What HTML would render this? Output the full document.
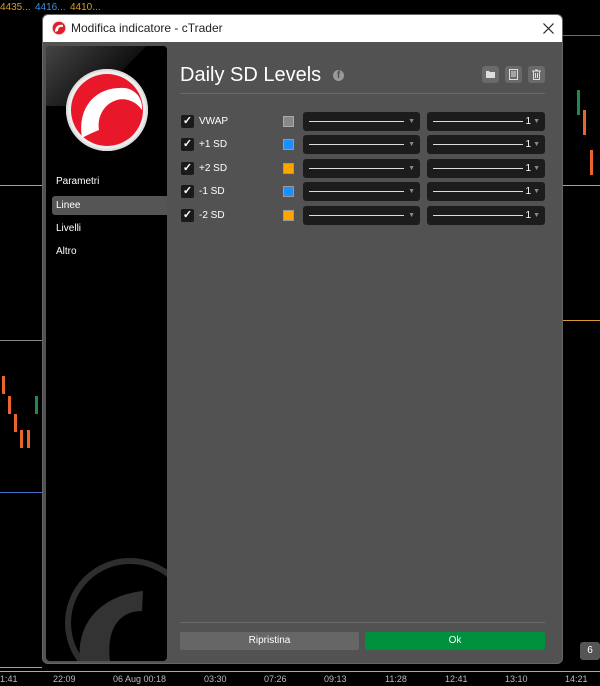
<!DOCTYPE html>
<html><head><meta charset="utf-8"><style>
*{margin:0;padding:0;box-sizing:border-box}
body{width:600px;height:686px;background:#000;position:relative;overflow:hidden;font-family:"Liberation Sans",sans-serif;}
.a{position:absolute}
.t{color:#fff;font-size:10px}
.cb{position:absolute;width:13px;height:13px;background:#1a1a1a;border-radius:2px;color:#fff;font-size:11px;line-height:13px;text-align:center;font-weight:bold}
.dd{position:absolute;height:19px;background:#1c1c1c;border-radius:3px}
.dd i{position:absolute;left:6px;right:16px;top:9px;height:1px;background:#ddd}
.dd b{position:absolute;right:5px;top:6px;font-size:7px;color:#888;font-weight:normal}
.ic{position:absolute;top:66px;width:17px;height:17px;background:#6a6a6a;border-radius:3px}
.ic svg{position:absolute;left:3px;top:3px}
</style></head><body>
<div class="a t" style="left:0;top:2px;color:#d79a2a;font-size:10px">4435...</div>
<div class="a t" style="left:35px;top:2px;color:#3b8ee0;font-size:10px">4416...</div>
<div class="a t" style="left:70px;top:2px;color:#d79a2a;font-size:10px">4410...</div>
<div class="a" style="left:0;top:185px;width:42px;height:1px;background:#d79a2a"></div>
<div class="a" style="left:0;top:340px;width:42px;height:1px;background:#888"></div>
<div class="a" style="left:0;top:492px;width:42px;height:1px;background:#3b6fc0"></div>
<div class="a" style="left:0;top:667px;width:42px;height:1px;background:#d79a2a"></div>
<div class="a" style="left:563px;top:185px;width:37px;height:1px;background:#d79a2a"></div>
<div class="a" style="left:563px;top:320px;width:37px;height:1px;background:#d79a2a"></div>
<div class="a" style="left:563px;top:35px;width:37px;height:1px;background:#3b6fc0"></div>
<div class="a" style="left:2px;top:376px;width:3px;height:18px;background:#e8652f"></div>
<div class="a" style="left:8px;top:396px;width:3px;height:18px;background:#e8652f"></div>
<div class="a" style="left:14px;top:414px;width:3px;height:18px;background:#e8652f"></div>
<div class="a" style="left:20px;top:430px;width:3px;height:18px;background:#e8652f"></div>
<div class="a" style="left:27px;top:430px;width:3px;height:18px;background:#e8652f"></div>
<div class="a" style="left:35px;top:396px;width:3px;height:18px;background:#1f8a4a"></div>
<div class="a" style="left:577px;top:90px;width:3px;height:25px;background:#1f8a4a"></div>
<div class="a" style="left:583px;top:110px;width:3px;height:25px;background:#e8652f"></div>
<div class="a" style="left:590px;top:150px;width:3px;height:25px;background:#e8652f"></div>
<div class="a" style="left:0;top:671px;width:600px;height:1px;background:#aaa"></div>
<div class="a" style="left:0;top:674px;width:600px;font-size:9px;color:#bbb;white-space:nowrap">
<span class="a" style="left:0">1:41</span><span class="a" style="left:53px">22:09</span><span class="a" style="left:113px">06 Aug 00:18</span><span class="a" style="left:204px">03:30</span><span class="a" style="left:264px">07:26</span><span class="a" style="left:324px">09:13</span><span class="a" style="left:385px">11:28</span><span class="a" style="left:445px">12:41</span><span class="a" style="left:505px">13:10</span><span class="a" style="left:565px">14:21</span></div>
<div class="a" style="left:580px;top:642px;width:20px;height:18px;background:#555;border-radius:3px;color:#fff;font-size:10px;text-align:center;line-height:18px">6</div>
<div class="a" style="left:42px;top:14px;width:521px;height:650px;background:#525252;border-radius:6px;overflow:hidden;border:1px solid #666">
 <div class="a" style="left:0;top:0;width:521px;height:27px;background:#fff"></div>
 <svg class="a" style="left:8px;top:5px" width="16" height="16" viewBox="0 0 16 16"><circle cx="8" cy="8" r="7.5" fill="#e8e8e8"/><circle cx="8" cy="8" r="6.3" fill="#e11d2a"/><path d="M4 12 C4 6 8 4 12 5 L12 7 C9 6 7 8 7 11Z" fill="#fff"/></svg>
 <div class="a" style="left:28px;top:6px;font-size:12px;color:#222">Modifica indicatore - cTrader</div>
 <svg class="a" style="left:500px;top:8px" width="11" height="11" viewBox="0 0 11 11"><path d="M0.5 0.5L10.5 10.5M10.5 0.5L0.5 10.5" stroke="#222" stroke-width="1.2"/></svg>
 <div class="a" style="left:3px;top:31px;width:121px;height:615px;background:#000;border-radius:4px;overflow:hidden">
  <div class="a" style="left:0;top:0;width:121px;height:60px;background:linear-gradient(135deg,#444,#111 55%,#000 56%)"></div>
  <svg class="a" style="left:19px;top:22px" width="84" height="84" viewBox="0 0 84 84"><circle cx="42" cy="42" r="41" fill="#eee"/><circle cx="42" cy="42" r="36" fill="#e8182a"/><path d="M17 70 C12 40 30 18 60 20 C72 22 78 32 77 42 C70 32 60 30 52 32 C38 36 32 50 34 62 Q24 66 17 70Z" fill="#fff"/><circle cx="42" cy="42" r="40" fill="none" stroke="#ddd" stroke-width="2"/></svg>
  <div class="a t" style="left:10px;top:130px">Parametri</div>
  <div class="a" style="left:6px;top:150px;width:115px;height:19px;background:#555;border-radius:3px 0 0 3px"></div>
  <div class="a t" style="left:10px;top:154px">Linee</div>
  <div class="a t" style="left:10px;top:177px">Livelli</div>
  <div class="a t" style="left:10px;top:200px">Altro</div>
  <svg class="a" style="left:12px;top:505px" width="109" height="110" viewBox="0 0 109 110"><circle cx="72" cy="72" r="62" fill="none" stroke="#2e2e2e" stroke-width="6"/><path d="M22 110 C18 75 40 45 85 40 L84 60 C60 60 48 80 52 110Z" fill="#333"/></svg>
 </div>
</div>
<div class="a" style="left:180px;top:64px;font-size:20px;color:#fff">Daily SD Levels</div>
<div class="a" style="left:333px;top:70px;width:11px;height:11px;border-radius:50%;background:#999;color:#525252;font-size:10px;font-weight:bold;text-align:center;line-height:12px">f</div>
<div class="ic" style="left:482px"><svg width="11" height="11" viewBox="0 0 11 11"><path d="M1 2h3l1 1h5v6H1z" fill="#ddd"/></svg></div>
<div class="ic" style="left:505px"><svg width="11" height="11" viewBox="0 0 11 11"><rect x="1.5" y="0.5" width="8" height="10" fill="none" stroke="#ddd"/><path d="M3 3h5M3 5h5M3 7h5" stroke="#ddd"/></svg></div>
<div class="ic" style="left:528px"><svg width="11" height="11" viewBox="0 0 11 11"><path d="M1 2h9M4 1h3M2.5 2.5v8h6v-8M4.5 4v5M6.5 4v5" stroke="#ddd" fill="none"/></svg></div>
<div class="a" style="left:180px;top:93px;width:365px;height:1px;background:#6a6a6a"></div>
<div class="a" style="left:180px;top:622px;width:365px;height:1px;background:#6a6a6a"></div>
<div class="a" style="left:180px;top:632px;width:179px;height:18px;background:#666;border-radius:2px;color:#fff;font-size:10px;text-align:center;line-height:18px">Ripristina</div>
<div class="a" style="left:365px;top:632px;width:180px;height:18px;background:#00913f;border-radius:2px;color:#fff;font-size:10px;text-align:center;line-height:18px">Ok</div>
<div class="cb" style="left:181px;top:115px">✓</div><div class="a t" style="left:199px;top:116px">VWAP</div><div class="a" style="left:283px;top:116px;width:11px;height:11px;background:#888;border:1px solid #aaa"></div>
<div class="dd" style="left:303px;top:112px;width:117px"><i></i><b>▼</b></div><div class="dd" style="left:427px;top:112px;width:118px"><i style="right:22px"></i><span class="a t" style="right:14px;top:4px">1</span><b>▼</b></div>
<div class="cb" style="left:181px;top:138px">✓</div><div class="a t" style="left:199px;top:139px">+1 SD</div><div class="a" style="left:283px;top:139px;width:11px;height:11px;background:#1e8fff;border:1px solid #999"></div>
<div class="dd" style="left:303px;top:135px;width:117px"><i></i><b>▼</b></div><div class="dd" style="left:427px;top:135px;width:118px"><i style="right:22px"></i><span class="a t" style="right:14px;top:4px">1</span><b>▼</b></div>
<div class="cb" style="left:181px;top:162px">✓</div><div class="a t" style="left:199px;top:163px">+2 SD</div><div class="a" style="left:283px;top:163px;width:11px;height:11px;background:#ffa500;border:1px solid #999"></div>
<div class="dd" style="left:303px;top:159px;width:117px"><i></i><b>▼</b></div><div class="dd" style="left:427px;top:159px;width:118px"><i style="right:22px"></i><span class="a t" style="right:14px;top:4px">1</span><b>▼</b></div>
<div class="cb" style="left:181px;top:185px">✓</div><div class="a t" style="left:199px;top:186px">-1 SD</div><div class="a" style="left:283px;top:186px;width:11px;height:11px;background:#1e8fff;border:1px solid #999"></div>
<div class="dd" style="left:303px;top:182px;width:117px"><i></i><b>▼</b></div><div class="dd" style="left:427px;top:182px;width:118px"><i style="right:22px"></i><span class="a t" style="right:14px;top:4px">1</span><b>▼</b></div>
<div class="cb" style="left:181px;top:209px">✓</div><div class="a t" style="left:199px;top:210px">-2 SD</div><div class="a" style="left:283px;top:210px;width:11px;height:11px;background:#ffa500;border:1px solid #999"></div>
<div class="dd" style="left:303px;top:206px;width:117px"><i></i><b>▼</b></div><div class="dd" style="left:427px;top:206px;width:118px"><i style="right:22px"></i><span class="a t" style="right:14px;top:4px">1</span><b>▼</b></div>
</body></html>
